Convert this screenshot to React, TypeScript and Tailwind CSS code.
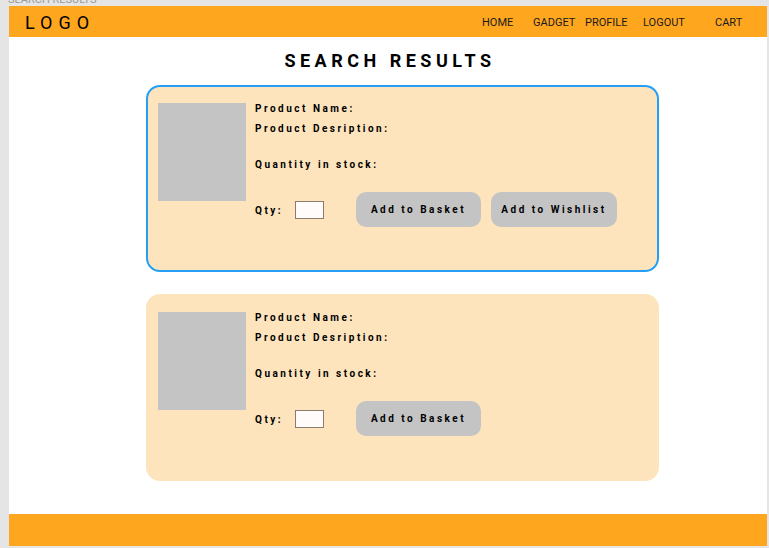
const navItems = [
    { label: 'HOME', w: 'w-[51px]' },
    { label: 'GADGET', w: 'w-[52px]' },
    { label: 'PROFILE', w: 'w-[58px]' },
    { label: 'LOGOUT', w: 'w-[72px]' },
    { label: 'CART', w: 'w-[52px]' },
];

const ProductCard = ({ selected, wishlist }: { selected?: boolean; wishlist?: boolean }) => {
    return (
        <div
            className={`flex h-[187px] w-[513px] rounded-[14px] border-2 bg-[#fee4bd] p-[10px] ${
                selected ? 'border-[#23a0f5]' : 'border-transparent'
            }`}
        >
            <div className="mt-[6px] h-[98px] w-[88px] shrink-0 bg-[#c4c4c4]" />
            <div className="ml-[9px] mt-[2px] flex flex-col text-[10px] font-bold tracking-[2.5px] text-black">
                <p className="leading-[20px]">Product Name:</p>
                <p className="leading-[20px]">Product Desription:</p>
                <p className="mt-[16px] leading-[20px]">Quantity in stock:</p>
                <div className="mt-[17px] flex h-[35px] items-center">
                    <span className="w-[40px] pt-[1px]">Qty:</span>
                    <input
                        type="text"
                        className="h-[18px] w-[29px] border border-[#8b7b6b] bg-[#fffbfa] outline-none"
                    />
                    <button className="ml-[32px] h-[35px] w-[125px] rounded-[10px] bg-[#c4c4c4] tracking-[2.5px]">
                        Add to Basket
                    </button>
                    {wishlist && (
                        <button className="ml-[10px] h-[35px] w-[126px] rounded-[10px] bg-[#c4c4c4] tracking-[2.5px]">
                            Add to Wishlist
                        </button>
                    )}
                </div>
            </div>
        </div>
    );
};

const App = () => {
    return (
        <div className="min-h-screen bg-[#e5e5e5] font-['Roboto',sans-serif]">
            <div className="h-[6px] overflow-hidden pl-[8px]">
                <p className="-mt-[6px] text-[11px] leading-[12px] text-[#9a9a9a]">SEARCH RESULTS</p>
            </div>
            <div className="ml-[9px] flex h-[540px] w-[758px] flex-col bg-white">
                <header className="flex h-[31px] items-center bg-[#ffa61f] pl-[16px] pt-[2px]">
                    <div className="text-[18px] tracking-[6px] text-black">LOGO</div>
                    <nav className="ml-auto flex pt-[1px] text-[11px] text-[#1a1a1a]">
                        {navItems.map(item => (
                            <a key={item.label} href="#" className={item.w}>
                                {item.label}
                            </a>
                        ))}
                    </nav>
                </header>

                <h1 className="mt-[12px] pl-[4px] text-center text-[18px] font-bold leading-[24px] tracking-[4.5px] text-black">
                    SEARCH RESULTS
                </h1>

                <div className="mt-[12px] flex flex-col gap-[22px] pl-[137px]">
                    <ProductCard selected wishlist />
                    <ProductCard />
                </div>

                <footer className="mt-auto h-[32px] bg-[#ffa61f]" />
            </div>
        </div>
    );
};

export default App;
